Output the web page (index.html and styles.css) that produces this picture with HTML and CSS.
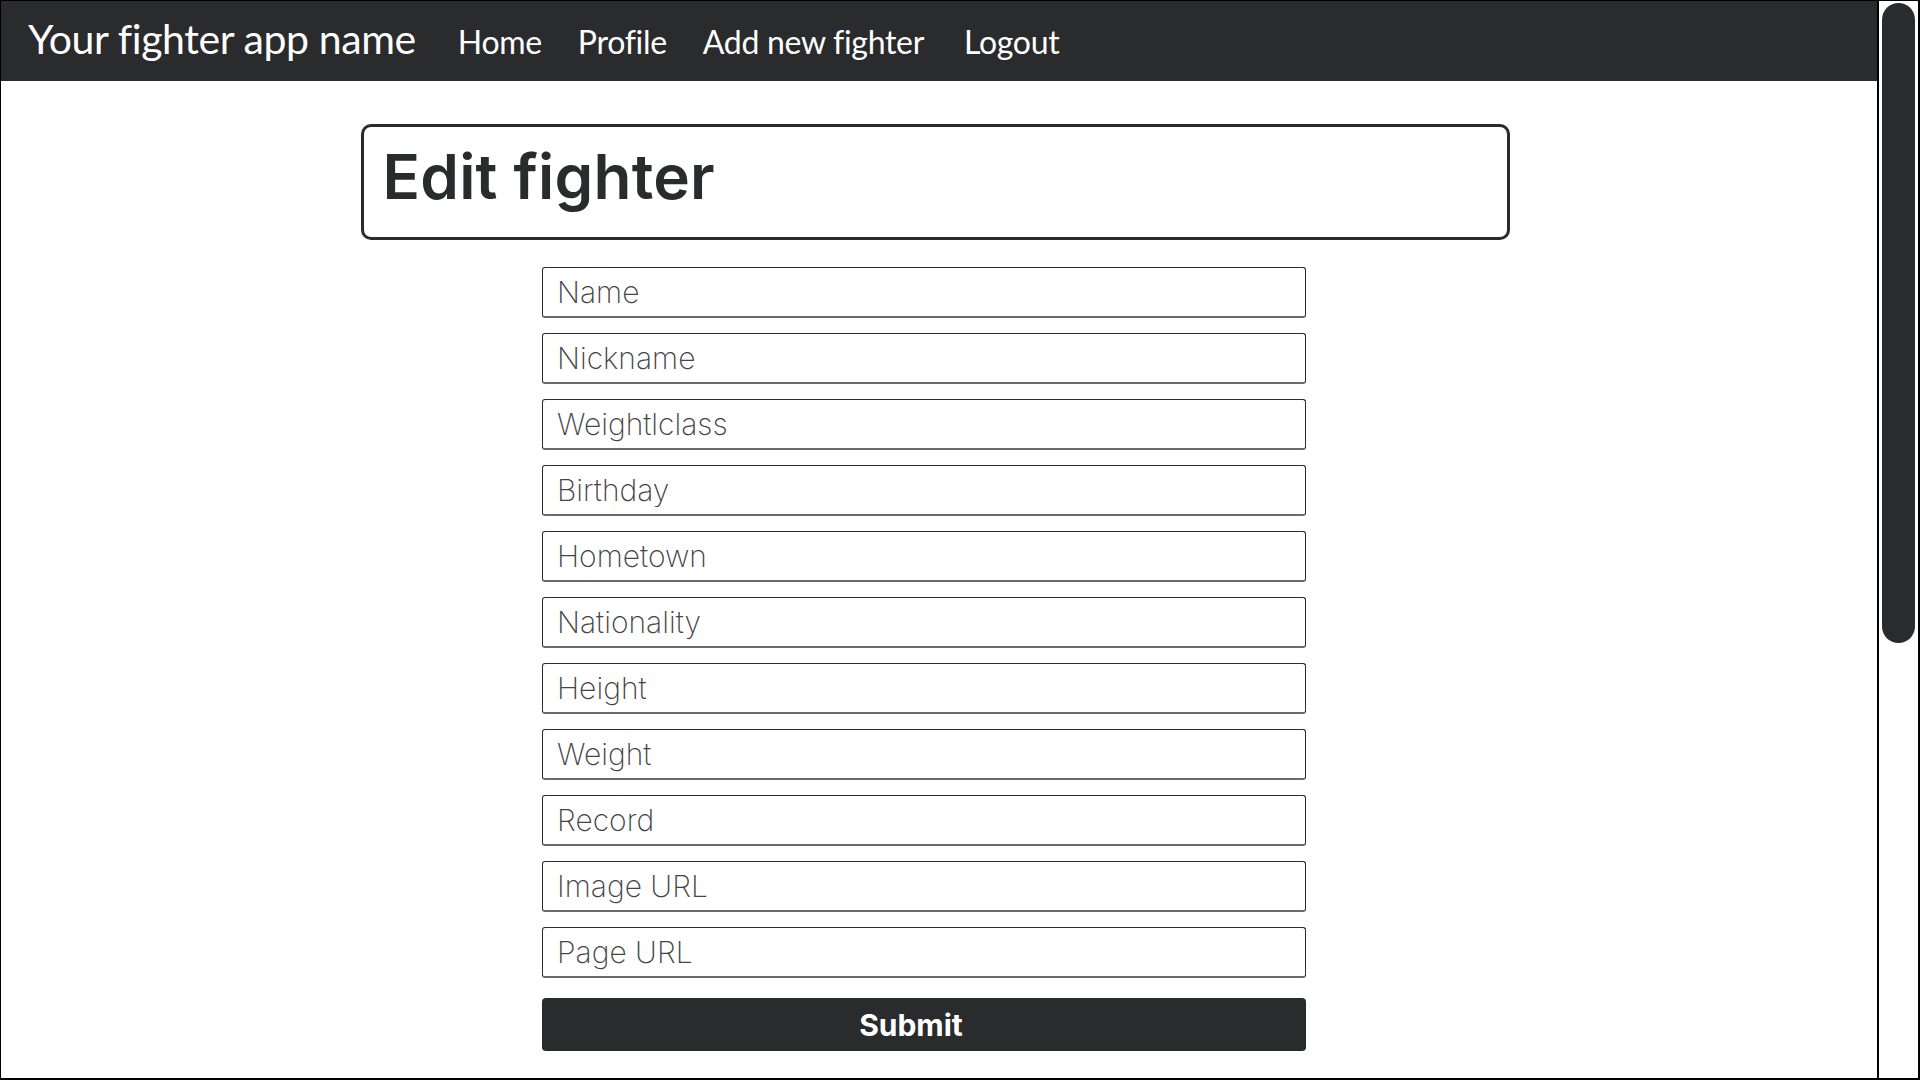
FILE: index.html
```html
<!DOCTYPE html>
<html lang="en">
<head>
<meta charset="utf-8">
<title>Edit fighter</title>
<link rel="stylesheet" href="styles.css">
</head>
<body>
<div class="frame">
  <div class="page">
    <nav class="navbar">
      <a class="brand" href="#">Your fighter app name</a>
      <ul class="nav-links">
        <li><a href="#">Home</a></li>
        <li><a href="#">Profile</a></li>
        <li><a href="#">Add new fighter</a></li>
        <li><a href="#" class="logout">Logout</a></li>
      </ul>
    </nav>
    <main class="main">
      <div class="title-wrap">
        <div class="title-box"><h1>Edit fighter</h1></div>
      </div>
      <div class="form-wrap">
        <form class="form">
          <input type="text" placeholder="Name">
          <input type="text" placeholder="Nickname">
          <input type="text" placeholder="Weightlclass">
          <input type="text" placeholder="Birthday">
          <input type="text" placeholder="Hometown">
          <input type="text" placeholder="Nationality">
          <input type="text" placeholder="Height">
          <input type="text" placeholder="Weight">
          <input type="text" placeholder="Record">
          <input type="text" placeholder="Image URL">
          <input type="text" placeholder="Page URL">
          <button type="button" class="submit">Submit</button>
        </form>
      </div>
    </main>
  </div>
  <div class="scrollbar" aria-hidden="true"><div class="thumb"></div></div>
</div>
</body>
</html>
```
FILE: styles.css
```css
* { box-sizing: border-box; }
html, body { margin: 0; padding: 0; height: 100%; overflow: hidden; background: #fff; }
.frame {
  height: 100vh;
  display: flex;
  border-top: 1px solid #000;
  border-left: 1px solid #000;
  border-right: 2px solid #000;
  border-bottom: 2px solid #000;
  background: #fff;
}
.page { flex: 1; min-width: 0; overflow: hidden; }
.scrollbar {
  width: 41px;
  flex: none;
  border-left: 2px solid #000;
  padding: 2px 3px;
  background: #fff;
}
.thumb {
  height: 640px;
  background: #2a2b2d;
  border-radius: 17px;
}
.navbar {
  height: 80px;
  background: #2a2b2d;
  display: flex;
  align-items: center;
  padding-left: 27px;
  font-family: Lato, "Open Sans", sans-serif;
}
.navbar a { color: #fff; text-decoration: none; }
.brand { font-size: 41px; letter-spacing: -0.4px; margin-right: 24px; margin-top: -6px; }
.nav-links { list-style: none; margin: 0; padding: 0; display: flex; align-items: center; }
.nav-links a { display: block; font-size: 32px; padding: 0 18px; letter-spacing: -0.3px; }
.nav-links a.logout { margin-left: 4px; }
.title-wrap { padding-right: 8px; margin-top: 43px; }
.title-box {
  width: 1149px;
  height: 116px;
  margin: 0 auto;
  border: 3px solid #2a2b2d;
  border-radius: 10px;
  padding: 14px 19px 0;
}
.title-box h1 {
  margin: 0;
  font-family: Inter, "Noto Sans", sans-serif;
  font-weight: 600;
  font-size: 62px;
  line-height: 72px;
  color: #2a2b2d;
  letter-spacing: 0.2px;
}
.form-wrap { padding-right: 30px; margin-top: 27px; }
.form {
  width: 764px;
  margin: 0 auto;
  display: flex;
  flex-direction: column;
  gap: 15px;
}
.form input {
  height: 51px;
  width: 100%;
  border: 1px solid #2a2b2d;
  border-bottom: 2px solid #6b6b6b;
  border-radius: 3px;
  padding: 0 14px;
  font-family: Inter, "Noto Sans", sans-serif;
  font-weight: 200;
  font-size: 30px;
  color: #2a2b2d;
  background: #fff;
}
.form input::placeholder { color: #444; font-weight: 200; }
.submit {
  margin-top: 5px;
  height: 53px;
  width: 100%;
  background: #2a2b2d;
  color: #fff;
  border: none;
  border-radius: 4px;
  font-family: Inter, "Noto Sans", sans-serif;
  font-weight: 700;
  font-size: 30px;
  padding: 0 26px 0 0;
}
```
